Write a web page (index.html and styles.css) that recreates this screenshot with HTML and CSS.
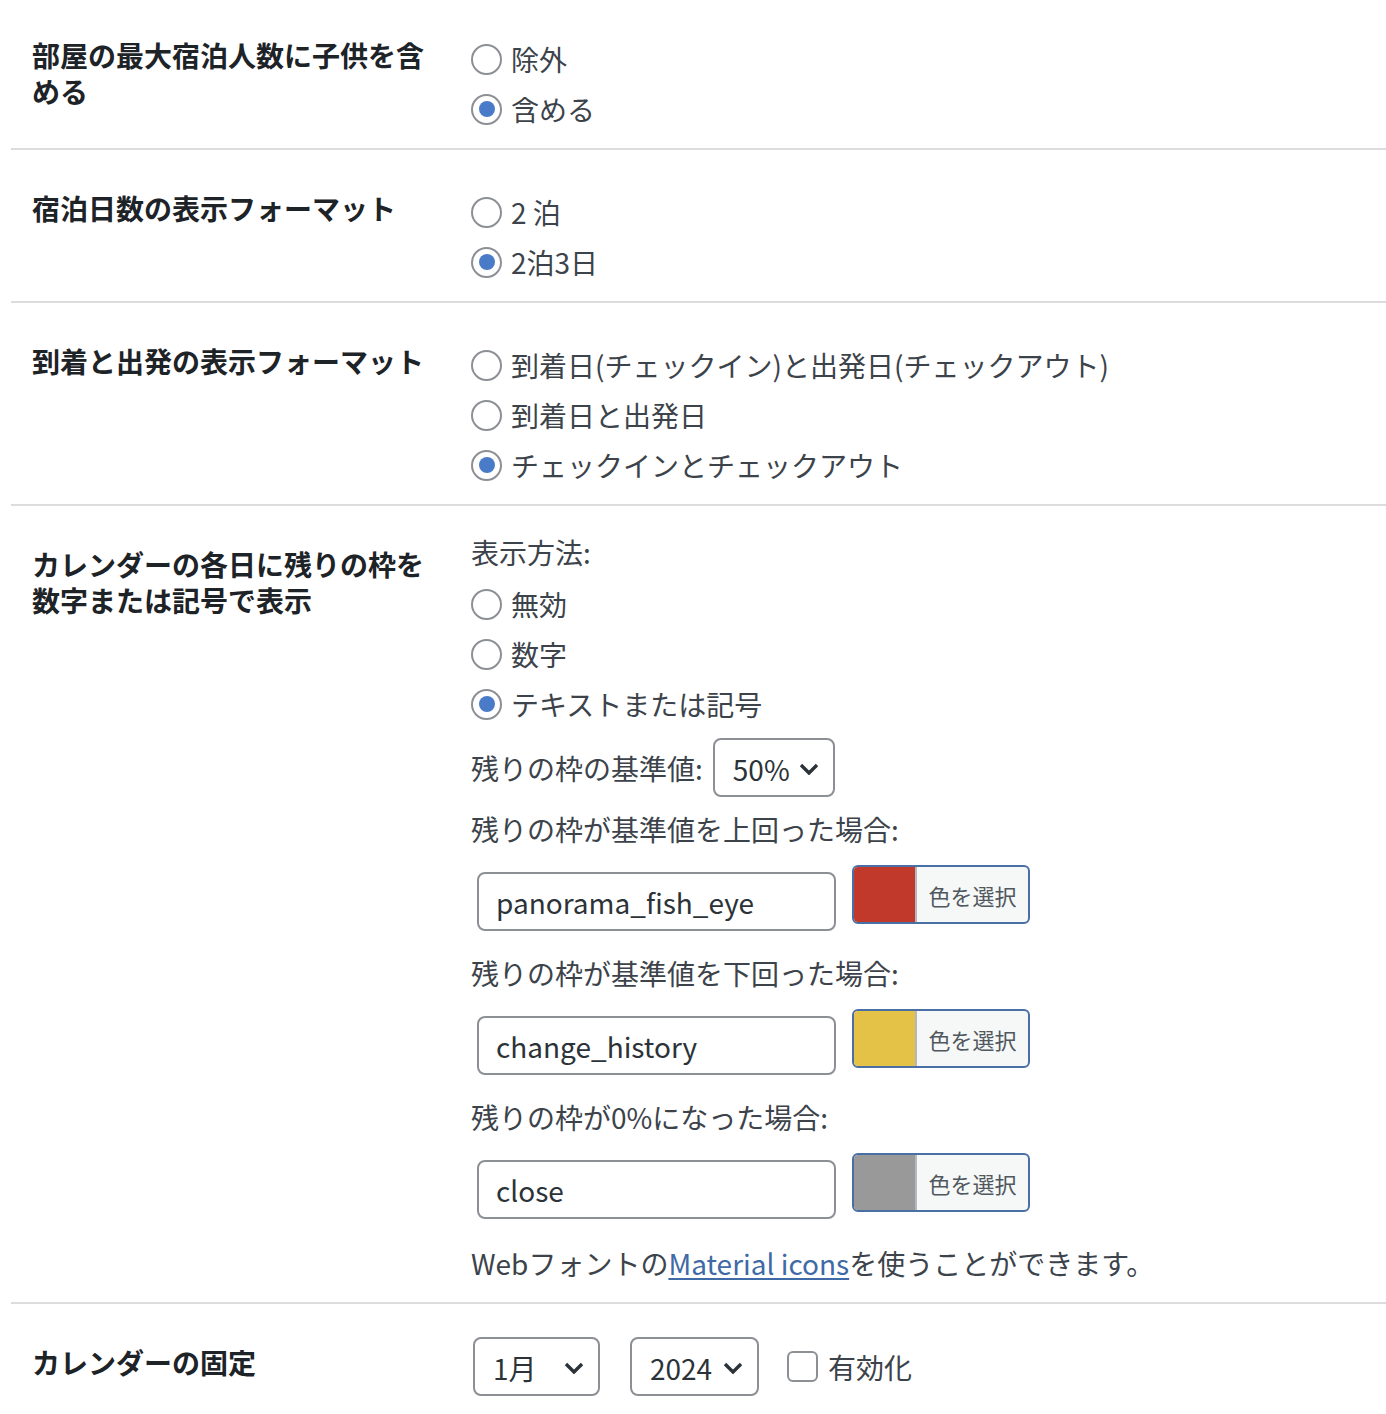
FILE: index.html
```html
<!DOCTYPE html>
<html lang="ja">

<head>
    <meta charset="UTF-8">
    <title>カレンダー設定</title>
    <link rel="stylesheet" href="styles.css">
</head>

<body>
    <table class="form-table">
        <tr>
            <th>部屋の最大宿泊人数に子供を含める</th>
            <td>
                <div class="radios">
                    <label class="radio"><span class="dot"></span>除外</label>
                    <label class="radio"><span class="dot checked"></span>含める</label>
                </div>
            </td>
        </tr>
        <tr>
            <th>宿泊日数の表示フォーマット</th>
            <td>
                <div class="radios">
                    <label class="radio"><span class="dot"></span>2 泊</label>
                    <label class="radio"><span class="dot checked"></span>2泊3日</label>
                </div>
            </td>
        </tr>
        <tr>
            <th>到着と出発の表示フォーマット</th>
            <td>
                <div class="radios">
                    <label class="radio"><span class="dot"></span>到着日(チェックイン)と出発日(チェックアウト)</label>
                    <label class="radio"><span class="dot"></span>到着日と出発日</label>
                    <label class="radio"><span class="dot checked"></span>チェックインとチェックアウト</label>
                </div>
            </td>
        </tr>
        <tr>
            <th>カレンダーの各日に残りの枠を数字または記号で表示</th>
            <td>
                <div class="line">表示方法:</div>
                <div class="radios">
                    <label class="radio"><span class="dot"></span>無効</label>
                    <label class="radio"><span class="dot"></span>数字</label>
                    <label class="radio"><span class="dot checked"></span>テキストまたは記号</label>
                </div>
                <div class="select-row">
                    <span>残りの枠の基準値:</span>
                    <div class="select pct">50%
                        <svg class="chev" width="20" height="12" viewBox="0 0 20 12"><path d="M2 2l8 8 8-8" fill="none" stroke="#2c3338" stroke-width="3.4"/></svg>
                    </div>
                </div>
                <div class="line field-label first">残りの枠が基準値を上回った場合:</div>
                <div class="color-row">
                    <div class="text-input">panorama_fish_eye</div>
                    <div class="color-btn"><span class="swatch red"></span><span class="pick">色を選択</span></div>
                </div>
                <div class="line field-label">残りの枠が基準値を下回った場合:</div>
                <div class="color-row">
                    <div class="text-input">change_history</div>
                    <div class="color-btn"><span class="swatch yellow"></span><span class="pick">色を選択</span></div>
                </div>
                <div class="line field-label">残りの枠が0%になった場合:</div>
                <div class="color-row">
                    <div class="text-input">close</div>
                    <div class="color-btn"><span class="swatch gray"></span><span class="pick">色を選択</span></div>
                </div>
                <div class="line note">Webフォントの<a href="#">Material icons</a>を使うことができます。</div>
            </td>
        </tr>
        <tr>
            <th>カレンダーの固定</th>
            <td class="fixed">
                <div class="select month">1月
                    <svg class="chev" width="20" height="12" viewBox="0 0 20 12"><path d="M2 2l8 8 8-8" fill="none" stroke="#2c3338" stroke-width="3.4"/></svg>
                </div>
                <div class="select year">2024
                    <svg class="chev" width="20" height="12" viewBox="0 0 20 12"><path d="M2 2l8 8 8-8" fill="none" stroke="#2c3338" stroke-width="3.4"/></svg>
                </div>
                <label class="check"><span class="box"></span>有効化</label>
            </td>
        </tr>
    </table>
</body>

</html>
```

FILE: styles.css
```css
body {
    margin: 0;
    padding-left: 11px;
    background-color: #ffffff;
    font-family: "Noto Sans CJK JP", "Noto Sans", sans-serif;
    color: #3c434a;
    overflow: hidden;
}
table.form-table {
    border-collapse: collapse;
    width: 1400px;
    margin-top: -3px;
}
tr {
    border-bottom: 2px solid #dcdcde;
}
th {
    width: 400px;
    padding: 40px 20px 21px 21px;
    text-align: left;
    vertical-align: top;
    font-size: 28px;
    line-height: 36px;
    font-weight: 700;
    color: #1d2327;
}
td {
    padding: 28px 0 21px 19px;
    vertical-align: top;
    font-size: 28px;
    line-height: 36px;
}
.radios {
    display: flex;
    flex-direction: column;
    gap: 14px;
    margin-top: 16px;
}
.radio {
    display: flex;
    align-items: center;
    height: 36px;
}
.dot {
    box-sizing: border-box;
    width: 31px;
    height: 31px;
    margin-right: 9px;
    border: 2px solid #8c8f94;
    border-radius: 50%;
    display: flex;
    align-items: center;
    justify-content: center;
}
.dot.checked::after {
    content: "";
    width: 16px;
    height: 16px;
    border-radius: 50%;
    background-color: #4a7bc8;
}
.select-row {
    display: flex;
    align-items: center;
    gap: 10px;
    margin-top: 16px;
}
.select {
    box-sizing: border-box;
    height: 59px;
    border: 2px solid #8c8f94;
    border-radius: 8px;
    display: flex;
    align-items: center;
    justify-content: space-between;
    padding: 2px 14px 0 18px;
    color: #2c3338;
}
.select.pct {
    width: 122px;
}
.chev {
    display: block;
}
.field-label {
    margin-top: 24px;
}
.field-label.first {
    margin-top: 14px;
}
.color-row {
    display: flex;
    align-items: flex-start;
    margin-top: 18px;
}
.text-input {
    box-sizing: border-box;
    width: 359px;
    height: 59px;
    margin: 7px 0 0 6px;
    border: 2px solid #8c8f94;
    border-radius: 8px;
    padding: 0 17px;
    display: flex;
    align-items: center;
    color: #2c3338;
}
.color-btn {
    box-sizing: border-box;
    width: 178px;
    height: 59px;
    margin-left: 16px;
    border: 2px solid #4a6fa5;
    border-radius: 6px;
    display: flex;
    overflow: hidden;
    background-color: #f6f7f7;
}
.swatch {
    width: 61px;
    border-right: 2px solid #b5b8bc;
}
.swatch.red {
    background-color: #c0392b;
}
.swatch.yellow {
    background-color: #e4c247;
}
.swatch.gray {
    background-color: #999999;
}
.pick {
    flex: 1;
    display: flex;
    align-items: center;
    justify-content: center;
    font-size: 22px;
    color: #50575e;
}
.note {
    margin-top: 26px;
}
.note a {
    color: #3f6aa6;
    text-decoration: underline;
    text-underline-offset: 3px;
}
td.fixed {
    display: flex;
    align-items: center;
    padding-top: 33px;
}
.select.month {
    width: 127px;
    margin-left: 2px;
}
.select.year {
    width: 129px;
    margin-left: 30px;
}
.check {
    display: flex;
    align-items: center;
    margin-left: 28px;
}
.box {
    box-sizing: border-box;
    width: 31px;
    height: 31px;
    border: 2px solid #8c8f94;
    border-radius: 6px;
    margin-right: 10px;
}
```
